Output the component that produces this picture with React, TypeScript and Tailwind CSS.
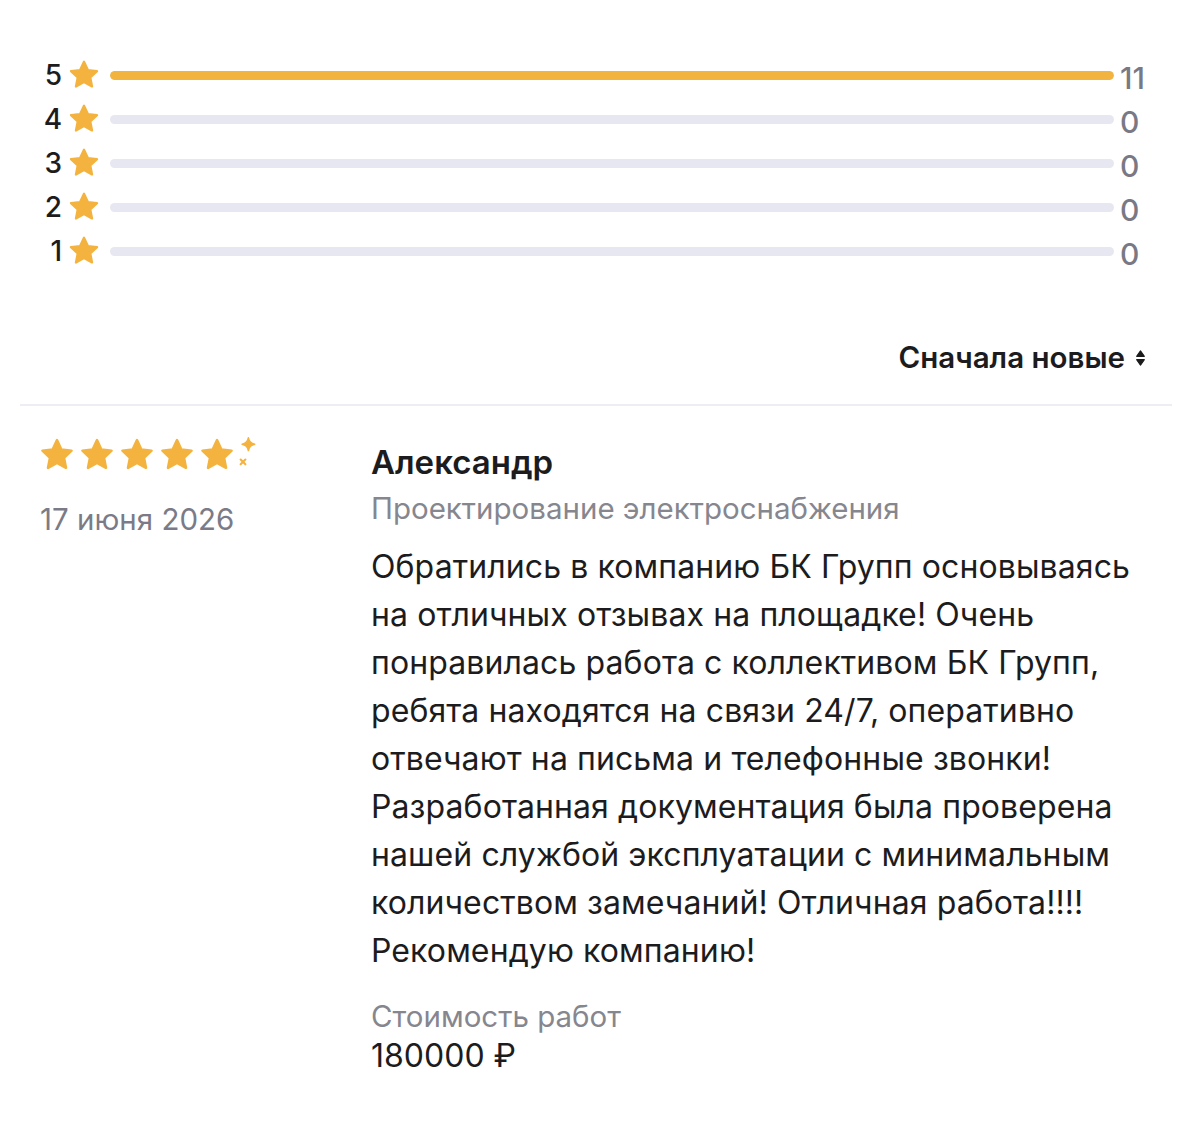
import React from "react";

const STAR = "M12 2.6l2.75 5.9 6.45.78-4.76 4.43 1.24 6.38L12 16.93l-5.68 3.16 1.24-6.38L2.8 9.28l6.45-.78z";

function Star({ size = 28 }: { size?: number }) {
  return (
    <svg width={size} height={size} viewBox="0 0 24 24">
      <path d={STAR} fill="#F4B33E" stroke="#F4B33E" strokeWidth="1.6" strokeLinejoin="round" />
    </svg>
  );
}

function SparkleStar() {
  return (
    <svg width={65} height={38} viewBox="0 0 41 24">
      <path d={STAR} fill="#F4B33E" stroke="#F4B33E" strokeWidth="1.6" strokeLinejoin="round" />
      <path d="M31.8 1.2c.45 2.6 1.4 3.55 4 4-2.6.45-3.55 1.4-4 4-.45-2.6-1.4-3.55-4-4 2.6-.45 3.55-1.4 4-4z" fill="#F4B33E" stroke="#F4B33E" strokeWidth="1" strokeLinejoin="round" />
      <path d="M26.9 14.9l3 3M29.9 14.9l-3 3" stroke="#F4B33E" strokeWidth="1.3" strokeLinecap="round" />
    </svg>
  );
}

const rows = [
  { n: 5, c: 11, pct: 100 },
  { n: 4, c: 0, pct: 0 },
  { n: 3, c: 0, pct: 0 },
  { n: 2, c: 0, pct: 0 },
  { n: 1, c: 0, pct: 0 },
];

export default function App() {
  return (
    <div className="w-[1202px] h-[1124px] bg-white text-[#1c1c1e]" style={{ fontFamily: "Inter, 'Noto Sans', sans-serif" }}>
      <div className="pt-[61px] pl-[42px] pr-[48px] flex flex-col gap-[16px]">
        {rows.map((r) => (
          <div key={r.n} className="flex items-center h-[28px]">
            <span className="w-[20px] text-right text-[28px] leading-none font-medium text-[#1c1c1e]">{r.n}</span>
            <span className="ml-[5px] flex"><Star size={34} /></span>
            <div className="ml-[9px] flex-1 h-[9px] rounded-full bg-[#E7E7F1] overflow-hidden">
              <div className="h-full rounded-full bg-[#F2B43F]" style={{ width: `${r.pct}%` }} />
            </div>
            <span className="ml-[6px] w-[34px] text-[30px] leading-none font-medium text-[#797986] mt-[6px]">{r.c}</span>
          </div>
        ))}
      </div>

      <div className="mt-[75px] pr-[56px] flex justify-end items-center h-[36px]">
        <span className="text-[29.5px] font-semibold leading-none text-[#1c1c1e]">Сначала новые</span>
        <svg className="ml-[10px]" width="11" height="20" viewBox="0 0 10 18">
          <path d="M5 2.5L8.5 7.5H1.5z" fill="#1c1c1e" strokeLinejoin="round" stroke="#1c1c1e" strokeWidth="1" />
          <path d="M5 15.5L8.5 10.5H1.5z" fill="#1c1c1e" strokeLinejoin="round" stroke="#1c1c1e" strokeWidth="1" />
        </svg>
      </div>

      <div className="mt-[28px] ml-[20px] w-[1152px] h-[2px] bg-[#EDEDF3]" />

      <div className="flex">
        <div className="w-[371px] pl-[38px] pt-[30px] shrink-0">
          <div className="flex items-center gap-[2px]">
            <Star size={38} />
            <Star size={38} />
            <Star size={38} />
            <Star size={38} />
            <SparkleStar />
          </div>
          <div className="mt-[31px] ml-[2px] text-[29.5px] leading-none text-[#7B7B88]">17 июня 2026</div>
        </div>
        <div className="w-[782px] pt-[36px]">
          <div className="text-[33px] leading-[40px] font-semibold text-[#1c1c1e]">Александр</div>
          <div className="mt-[8px] text-[29.5px] leading-[36px] text-[#86868F]">Проектирование электроснабжения</div>
          <p className="mt-[17px] text-[32px] leading-[48px] tracking-[0.1px] text-[#1c1c1e]">
            Обратились в компанию БК Групп основываясь на отличных отзывах на площадке! Очень понравилась работа с коллективом БК Групп, ребята находятся на связи 24/7, оперативно отвечают на письма и телефонные звонки! Разработанная документация была проверена нашей службой эксплуатации с минимальным количеством замечаний! Отличная работа!!!! Рекомендую компанию!
          </p>
          <div className="mt-[23px] text-[29.5px] leading-[36px] text-[#86868F]">Стоимость работ</div>
          <div className="mt-[4px] text-[32px] leading-[36px] text-[#1c1c1e]">180000 ₽</div>
        </div>
      </div>
    </div>
  );
}
